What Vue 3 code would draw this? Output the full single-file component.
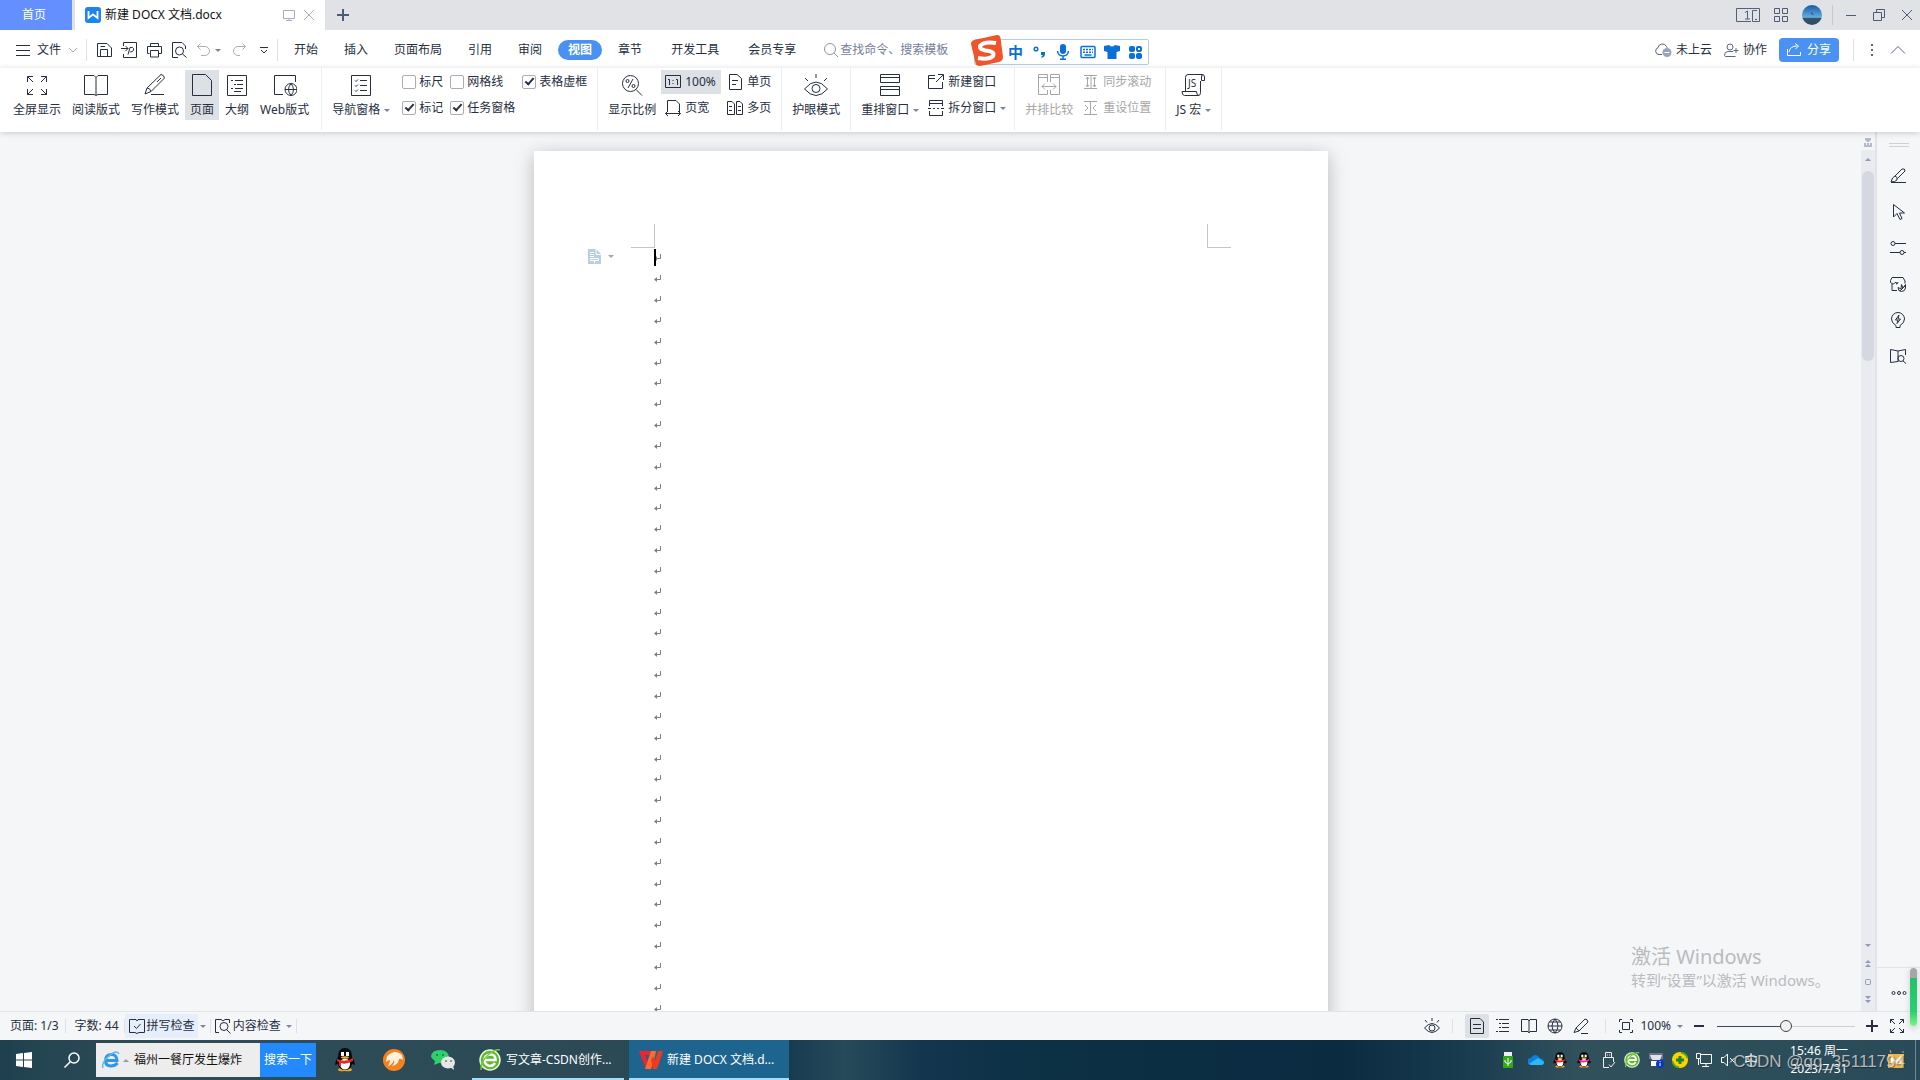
<template>
  <div class="desktop">
    <header class="title-bar">
      <button class="home-tab">首页</button>
      <div class="doc-tab">
        <svg class="logo-w" width="16" height="16" viewBox="0 0 16 16">
          <rect width="16" height="16" rx="3" fill="#1b84f5" />
          <path d="M3.500 4V11L8 7.500L12.500 11V4" fill="none" stroke="#fff" stroke-width="1.800" />
        </svg>
        <span class="doc-name">新建 DOCX 文档.docx</span>
        <button class="plain pale" aria-label="桌面"><Icon name="screen" :size="12" /></button>
        <button class="plain pale" aria-label="关闭标签"><Icon name="close" :size="12" /></button>
      </div>
      <button class="plain add-tab" aria-label="新建标签"><Icon name="plus" :size="12" /></button>
      <div class="window-tools">
        <svg width="24" height="14" viewBox="0 0 24 14" fill="none" stroke="#52607c">
          <path d="M15 13.5H.5V.5H23.5V13.5H16.5V2.5H21M9 4.5L11.500 3V11M9 11H14M19 11.500H21" />
        </svg>
        <Icon name="grid" :size="14" />
        <svg width="20" height="20" viewBox="0 0 20 20">
          <defs>
            <linearGradient id="sky" x2="0" y2="1">
              <stop offset="0" stop-color="#1c57a5" />
              <stop offset=".62" stop-color="#63aee0" />
              <stop offset=".65" stop-color="#38536a" />
              <stop offset="1" stop-color="#2c4b60" />
            </linearGradient>
          </defs>
          <circle cx="10" cy="10" r="10" fill="url(#sky)" />
          <path d="M9 7L12 10L9.500 9Z" fill="#24384f" />
        </svg>
        <i class="bar-line"></i>
        <button class="plain" aria-label="最小化"><Icon name="minimize" :size="12" /></button>
        <button class="plain" aria-label="还原"><Icon name="restore" :size="12" /></button>
        <button class="plain" aria-label="关闭"><Icon name="close" :size="12" /></button>
      </div>
    </header>

    <div class="menu-row">
      <button class="plain file-btn">
        <Icon name="lines" :size="14" />文件<Icon class="faint" name="chevron" :size="10" />
      </button>
      <i class="v-line"></i>
      <div class="quick">
        <button v-for="n in ['save', 'export', 'print', 'preview']" :key="n" class="plain" :aria-label="n">
          <Icon :name="n" :size="16" />
        </button>
        <button class="plain undo faint" aria-label="撤销"><Icon name="undo" :size="14" /><i class="caret"></i></button>
        <button class="plain faint" aria-label="恢复"><Icon name="redo" :size="14" /></button>
        <button class="plain more-quick" aria-label="更多"><Icon name="more" :size="8" /></button>
      </div>
      <i class="v-line"></i>
      <nav class="tabs">
        <button v-for="t in tabs" :key="t" class="tab" :class="{ active: t === '视图', wide: t === '开发工具' || t === '会员专享' }">{{ t }}</button>
      </nav>
      <label class="search">
        <Icon name="search" :size="16" />
        <input type="text" placeholder="查找命令、搜索模板" aria-label="查找命令" />
      </label>
      <div class="menu-right">
        <button class="plain with-icon">
          <svg width="17" height="16" viewBox="0 0 17 16" fill="none" stroke="#52607c">
            <path d="M7 12.500H4A3.500 3.500 0 0 1 3 5.700A4.500 4.500 0 0 1 11.500 4.500Q12 5 12.200 6" />
            <circle cx="12" cy="10.500" r="4.500" fill="#9aa3b8" stroke="none" />
            <path d="M9.500 10.500H14.500" stroke="#fff" />
          </svg>未上云
        </button>
        <button class="plain with-icon"><Icon class="slate" name="person" :size="15" />协作</button>
        <button class="share"><Icon name="share" :size="14" />分享</button>
        <i class="v-line"></i>
        <button class="plain slate" aria-label="更多"><Icon name="dots" :size="12" /></button>
        <button class="plain slate" aria-label="收起"><Icon name="collapse" :size="16" /></button>
      </div>
      <!-- 输入法悬浮条 -->
      <div class="ime">
        <svg class="ime-logo" width="32" height="32" viewBox="0 0 32 32">
          <path d="M3 5L26 0Q29 0 29.500 3L32 22Q32 26 28 27L9 31Q5 31 4.500 28L0 9Q0 6 3 5Z" fill="#f0542a" />
          <path d="M25 8Q13 6 9 11Q8 15 18 16Q24 17 22 21Q18 25 7 23" fill="none" stroke="#fff" stroke-width="4" />
        </svg>
        <b class="ime-zh">中</b>
        <svg width="16" height="16" viewBox="0 0 16 16" fill="#0b6fd8">
          <circle cx="4" cy="5" r="1.800" fill="none" stroke="#0b6fd8" stroke-width="1.500" />
          <path d="M9 8H13V11Q12 13.500 9.500 14V12.500L11 11H9Z" />
        </svg>
        <svg width="16" height="16" viewBox="0 0 16 16" fill="#0b6fd8">
          <rect x="4" y="0" width="6" height="10" rx="3" />
          <path d="M1.500 7Q2 12 7 12T12.500 7M7 12V16M4 15.300H10" fill="none" stroke="#0b6fd8" stroke-width="1.500" />
        </svg>
        <svg width="16" height="16" viewBox="0 0 16 16" fill="none" stroke="#0b6fd8" stroke-width="1.500">
          <rect x="1" y="2.500" width="14" height="11" rx="1" />
          <path d="M3 5.500H13M3 8.300H13" stroke-dasharray="2 1" /><path d="M4.500 11H11.500" />
        </svg>
        <svg width="16" height="16" viewBox="0 0 16 16" fill="#0b6fd8">
          <path d="M0 2L5 1Q8 4 11 1L16 2V7L12.500 8V15H3.500V8L0 7Z" />
        </svg>
        <svg width="16" height="16" viewBox="0 0 16 16" fill="#0b6fd8">
          <rect x="1" y="2" width="6" height="6" rx="2" /><rect x="1" y="9" width="6" height="6" rx="2" />
          <rect x="8" y="9" width="6" height="6" rx="2" />
          <rect x="9" y="3" width="4" height="4" rx="1" fill="none" stroke="#0b6fd8" stroke-width="2" />
        </svg>
      </div>
    </div>

    <div class="ribbon">
      <section class="group views">
        <button v-for="v in views" :key="v.text" class="big" :class="{ on: v.text === '页面' }">
          <Icon :name="v.icon" :size="24" /><span>{{ v.text }}</span>
        </button>
      </section>
      <section class="group">
        <button class="big"><Icon name="nav" :size="24" /><span>导航窗格<i class="caret"></i></span></button>
        <div class="checks">
          <label v-for="c in checks" :key="c.text"><input type="checkbox" :checked="c.on" />{{ c.text }}</label>
        </div>
      </section>
      <section class="group zooms">
        <button class="big"><Icon name="percent" :size="24" /><span>显示比例</span></button>
        <div class="pairs">
          <button class="small on"><Icon name="one" :size="16" />100%</button>
          <button class="small"><Icon name="single" :size="16" />单页</button>
          <button class="small"><Icon name="width" :size="16" />页宽</button>
          <button class="small"><Icon name="multi" :size="16" />多页</button>
        </div>
      </section>
      <section class="group">
        <button class="big"><Icon name="eye" :size="24" /><span>护眼模式</span></button>
      </section>
      <section class="group">
        <button class="big"><Icon name="arrange" :size="24" /><span>重排窗口<i class="caret"></i></span></button>
        <div class="stack">
          <button class="small"><Icon name="newwin" :size="16" />新建窗口</button>
          <button class="small"><Icon name="split" :size="16" />拆分窗口<i class="caret"></i></button>
        </div>
      </section>
      <section class="group compare">
        <button class="big" disabled><Icon name="compare" :size="24" /><span>并排比较</span></button>
        <div class="stack">
          <button class="small" disabled><Icon name="sync" :size="16" />同步滚动</button>
          <button class="small" disabled><Icon name="reset" :size="16" />重设位置</button>
        </div>
      </section>
      <section class="group last">
        <button class="big">
          <svg width="24" height="24" viewBox="0 0 24 24" fill="none" stroke="currentColor">
            <path d="M4.500 17V3.500Q4.500 .5 7 .5H21Q23.500 .5 23.500 3V6.500H20.500V3Q20.500 .5 22 .5M19.500 7V18.500Q19.500 21.500 17.500 21.500H3.500Q1 21.500 1 17.500H15.500Q15.500 21.500 18 21.500" />
            <text x="7" y="13" font-size="10" fill="currentColor" stroke="none">JS</text>
          </svg>
          <span>JS 宏<i class="caret"></i></span>
        </button>
      </section>
    </div>

    <main class="workspace">
      <div class="canvas">
        <article class="page">
          <div class="corners"><i class="corner left"></i><i class="corner right"></i></div>
          <ul class="lines">
            <li v-for="n in 37" :key="n">
              <svg width="7" height="8" viewBox="0 0 7 8" fill="none" stroke="#808080">
                <path d="M6.500 0V4.500H1" /><path d="M3 2V7L0 4.500Z" fill="#808080" stroke="none" />
              </svg>
            </li>
          </ul>
          <i class="cursor"></i>
          <button class="page-mark" aria-label="页面选项">
            <svg width="13" height="15" viewBox="0 0 13 15">
              <path d="M0 0H8L13 5V15H0Z" fill="#b8cdea" />
              <path d="M8 0V5.500H13M2 3.500H6M2 5.500H6M2 7.500H6M2.500 9.500H10.500V11.500H2.500ZM6.500 11.500V14" fill="none" stroke="#fff" />
            </svg>
            <i class="caret"></i>
          </button>
        </article>
        <p class="activate"><span>激活 Windows</span><small>转到“设置”以激活 Windows。</small></p>
      </div>
      <div class="scroll">
        <svg class="ruler" width="8" height="9" viewBox="0 0 8 9" fill="#b3bace"><path d="M1 0H7V2L4 4.500L1 2ZM0 5H2V7H3V5H5V7H6V5H8V9H0Z" /></svg>
        <div class="track">
          <i class="arrow up"></i>
          <i class="thumb"></i>
          <i class="arrow down"></i>
          <svg width="8" height="8" viewBox="0 0 8 8" fill="#8f9ab5"><path d="M4 0L7 3H1ZM4 4L7 7H1Z" /></svg>
          <svg width="8" height="8" viewBox="0 0 8 8" fill="none" stroke="#8f9ab5"><rect x="1.500" y="1.500" width="5" height="5" rx="1" /></svg>
          <svg width="8" height="8" viewBox="0 0 8 8" fill="#8f9ab5"><path d="M1 0H7L4 3ZM1 4H7L4 7Z" /></svg>
        </div>
      </div>
      <aside class="side">
        <i class="grip"></i>
        <button v-for="s in sideTools" :key="s" class="plain" :aria-label="s"><Icon :name="s" :size="16" /></button>
        <div class="side-more"><Icon name="ellipsis" :size="16" /></div>
      </aside>
    </main>

    <footer class="status">
      <span class="stat first">页面: 1/3</span>
      <span class="stat">字数: 44</span>
      <button class="stat tool"><span class="lit"><Icon name="spell" :size="16" />拼写检查</span><i class="caret"></i></button>
      <button class="stat tool"><span><Icon name="content" :size="16" />内容检查</span><i class="caret"></i></button>
      <div class="status-right">
        <button class="plain" aria-label="护眼"><Icon name="eyeSmall" :size="16" /></button>
        <i class="v-line"></i>
        <div class="modes">
          <button v-for="m in modes" :key="m" class="plain mode" :class="{ on: m === 'doc' }" :aria-label="m"><Icon :name="m" :size="16" /></button>
        </div>
        <i class="v-line"></i>
        <button class="plain zoom-value"><Icon name="fit" :size="16" />100%<i class="caret"></i></button>
        <button class="plain" aria-label="缩小"><Icon name="minusBold" :size="12" /></button>
        <input class="zoom" type="range" value="50" aria-label="缩放" />
        <button class="plain zoom-in" aria-label="放大"><Icon name="plus" :size="12" /></button>
        <button class="plain" aria-label="全屏"><Icon name="expand" :size="16" /></button>
      </div>
    </footer>

    <footer class="taskbar">
      <button class="plain start" aria-label="开始">
        <svg width="16" height="16" viewBox="0 0 16 16" fill="#fff"><path d="M0 2L7 1V7.500H0ZM8 1L16 0V7.500H8ZM0 8.500H7V15L0 14ZM8 8.500H16V16L8 15Z" /></svg>
      </button>
      <button class="plain find" aria-label="搜索">
        <svg width="16" height="16" viewBox="0 0 16 16" fill="none" stroke="#fff" stroke-width="1.500"><circle cx="10" cy="6" r="5" /><path d="M6.500 9.500L.5 15.500" /></svg>
      </button>
      <div class="hot">
        <svg width="18" height="18" viewBox="0 0 18 18" fill="none">
          <path d="M15.500 12Q13 15 9 15Q3.500 15 3.500 9.500T9 3.500T15 9.500H5" stroke="#2f95ea" stroke-width="3" />
          <path d="M1 17Q-1 12 7 5T17 3" stroke="#5bb6f7" stroke-width="1.500" />
        </svg>
        <i class="caret up-caret"></i>
        <input type="text" value="福州一餐厅发生爆炸" aria-label="热搜" />
        <button>搜索一下</button>
      </div>
      <button class="plain app" aria-label="QQ"><Penguin scarf="#e3262b" :size="24" /></button>
      <button class="plain app" aria-label="游戏">
        <svg width="24" height="24" viewBox="0 0 24 24">
          <circle cx="12" cy="12" r="11" fill="#f58220" />
          <path d="M4 14Q4 6 12 4Q17 4 20 7L21 12Q19 10 17 11Q16 17 10 18Q13 15 12 12Q10 17 6 18Q8 15 8 12Q6 12 4 14Z" fill="#fff3df" />
        </svg>
      </button>
      <button class="plain app" aria-label="微信">
        <svg width="24" height="24" viewBox="0 0 24 24">
          <path d="M3 17L4 13Q0 10 0 8Q1 2 9 2T18 9Q17 16 8 15Z" fill="#2fd06c" />
          <ellipse cx="17" cy="14.500" rx="7" ry="6" fill="#e6e6e6" /><path d="M19 19L23 22L22 17Z" fill="#e6e6e6" />
          <g fill="#1a7b42"><circle cx="6" cy="7" r="1" /><circle cx="12" cy="7" r="1" /></g>
          <g fill="#777"><circle cx="15" cy="13" r="1" /><circle cx="20" cy="13" r="1" /></g>
        </svg>
      </button>
      <button class="task">
        <BrowserE :size="22" />写文章-CSDN创作...
      </button>
      <button class="task current">
        <svg width="24" height="20" viewBox="0 0 24 20">
          <path d="M0 1H12L11 5H6L9 13L7 19Z" fill="#f5222a" />
          <path d="M6 19L12 1H17L15 11L12 19Z" fill="#ff6a30" />
          <path d="M24 1H19L16 11L14 6L12 10L14 19H18Z" fill="#f0391f" />
        </svg>新建 DOCX 文档.d...
      </button>
      <div class="tray">
        <svg class="usb" width="16" height="16" viewBox="0 0 16 16"><path d="M4 0H12V4H4Z" fill="#eee" /><rect x="3" y="4" width="10" height="12" rx="1" fill="#35a818" /><path d="M8 14V6M5 8V10L8 12L11 10V8" fill="none" stroke="#fff" /></svg>
        <svg width="16" height="16" viewBox="0 0 16 16"><path d="M3 13A3.500 3.500 0 0 1 3 6Q6 1 10 4L12 6Q16 7 16 10T13 13Z" fill="#0a7fe0" /><path d="M1 12L10 6L16 10Q16 13 13 13H3Z" fill="#2fb8f5" /></svg>
        <Penguin scarf="#e3262b" :size="16" />
        <Penguin scarf="#f0219d" :size="16" />
        <svg width="16" height="16" viewBox="0 0 16 16" fill="none" stroke="#eee"><path d="M5.500 5V.5H11.500V5M9 15.500H3.500V5.500H13.500V10M7 3H8M9 3H10M9 12.500L11 15L15 10" /></svg>
        <BrowserE :size="16" />
        <svg width="16" height="16" viewBox="0 0 16 16"><path d="M1 1H15V7H1Z" fill="#6d7490" /><path d="M2 3H14L12 8H4Z" fill="#dfe3f0" /><path d="M3 9H10V14H3Z" fill="#fff" /><circle cx="12" cy="12" r="4" fill="#0b35c4" /><path d="M12 9V10M12 11V14" stroke="#fff" /></svg>
        <svg width="16" height="16" viewBox="0 0 16 16"><circle cx="8" cy="8" r="8" fill="#fbd400" /><path d="M0 9Q2 15 7 15.500M9 .5Q14 1 15.500 6" stroke="#47a420" stroke-width="2" fill="none" /><path d="M8 4V12M4 8H12" stroke="#218220" stroke-width="3" /></svg>
        <svg width="16" height="16" viewBox="0 0 16 16" fill="none" stroke="#fff"><path d="M4 2.500H15.500V11.500H4.500V7M10 11.500V14.500M6 14.500H13M.5 1.500H4.500V6.500H.5ZM2.500 6.500V13" /></svg>
        <svg width="16" height="16" viewBox="0 0 16 16" fill="none" stroke="#fff"><path d="M1.500 5.500H4L7.500 2V14L4 10.500H1.500ZM10 6L14.500 10.500M14.500 6L10 10.500" /></svg>
        <span class="tray-zh">中</span>
      </div>
      <time class="clock"><span>15:46 周一</span><span>2023/7/31</span></time>
      <svg class="note" width="16" height="18" viewBox="0 0 16 18"><path d="M0 4H16V18H0Z" fill="#efb640" /><path d="M2 0L3 3M15 1V3" stroke="#d9aa48" /><path d="M4 14V8L8 12L12 8V14" stroke="#fff" stroke-width="2" fill="none" /></svg>
      <i class="peek"></i>
    </footer>

    <div class="battery"></div>
    <p class="mark">CSDN @qq_35111794</p>
  </div>
</template>

<script setup>
import { h } from 'vue'

const tabs = ['开始', '插入', '页面布局', '引用', '审阅', '视图', '章节', '开发工具', '会员专享']
const views = [
  { text: '全屏显示', icon: 'full' },
  { text: '阅读版式', icon: 'read' },
  { text: '写作模式', icon: 'write' },
  { text: '页面', icon: 'page' },
  { text: '大纲', icon: 'outline' },
  { text: 'Web版式', icon: 'web' },
]
const checks = [
  { text: '标尺', on: false },
  { text: '网格线', on: false },
  { text: '表格虚框', on: true },
  { text: '标记', on: true },
  { text: '任务窗格', on: true },
]
const sideTools = ['brush', 'pointer', 'sliders', 'shop', 'bulb', 'lookup']
const modes = ['doc', 'list', 'book', 'globe', 'pen']

// 线条图标, 坐标与显示尺寸一致
const paths = {
  screen: 'M.5 1.5H11.5V9.5H.5ZM6 9.5V11.5M3 11.5H9',
  close: 'M1 1L11 11M11 1L1 11',
  plus: 'M6 0V12M0 6H12',
  minusBold: 'M1 6H11',
  grid: 'M.5 .5H5.5V5.5H.5ZM8.5 .5H13.5V5.5H8.5ZM.5 8.5H5.5V13.5H.5ZM8.5 8.5H13.5V13.5H8.5Z',
  minimize: 'M1 6.5H11',
  restore: 'M.5 3.5H8.5V11.5H.5ZM3.5 3.5V.5H11.5V8.5H8.5',
  lines: 'M0 2.5H14M0 7.5H14M0 12.5H14',
  chevron: 'M1 3L5 7L9 3',
  save: 'M1.5 1.5H11L15.5 6V14.5H1.5ZM4.5 14V7.5H11.5V14M4.5 4.500H9',
  export: 'M2.5 4V.5H15.5V15.5H2.5V12M0 6.500H7M4.500 4L7 6.500L4.500 9M7 12.500Q8 9 9 5.500H11.500Q13 6 12.500 8T9 10',
  print: 'M4.5 4V1.5H12.5V4M3.5 11.5H1.5V4.5H15.5V11.500H13M4.500 8.500H12.500V15H4.500Z',
  preview: 'M7 15.5H1.5V.5H11L14.500 4V7M12.500 9A4 4 0 1 1 4.500 9A4 4 0 1 1 12.500 9M11.500 12L15.500 15.500',
  undo: 'M4.500 .5L1.500 3.500L4.500 6.500M1.500 3.500H9A4 4 0 0 1 9 12.500H5',
  redo: 'M9.500 .5L12.500 3.500L9.500 6.500M12.500 3.500H5A4 4 0 0 0 5 12.500H7',
  more: 'M0 1.500H8M1 4L4 7L7 4',
  search: 'M12.500 7A5.500 5.500 0 1 1 1.500 7A5.500 5.500 0 1 1 12.500 7M11 11L15 15',
  person: 'M9 4A3 3 0 1 1 3 4A3 3 0 1 1 9 4M9 8.500H4Q.5 8.500 .5 12.500Q1 13.500 2 13.500H11.500M12 5V10M9.500 7.500H14.500',
  share: 'M.5 6V12.500H13.500V9M2 9Q3 3 10 3M8 .5L11.500 3L8.500 6',
  dots: 'M6 0V2M6 5V7M6 10V12',
  collapse: 'M1 11.500L8 4.500L15 11.500',
  full: 'M2.5 8V2.5H8M2.5 2.5L8 8M16 2.5H21.5V8M21.500 2.500L16 8M2.500 15V20.500H8M2.500 20.500L8 15M16 20.500H21.500V15M21.500 20.500L16 15',
  read: 'M.5 1.5H10L12 3.500L14 1.500H23.500V20.500H14L12 21.500L10 20.500H.5ZM12 3.500V21',
  write: 'M2 20L4 14L18 .5Q21 1 21.500 4L8 17.500ZM4 14Q7 14 8 17.500M14 8L18 4M8 20.500H21',
  page: 'M2.5 .5H15.500L21.500 6.500V21.500H2.500Z',
  outline: 'M2.5 1.5H21.500V21.500H2.500ZM6 6.500H8M10 6.500H18M9 10.500H11M12 10.500H18M6 14.500H8M10 14.500H18M9 17.500H16',
  web: 'M10 20.500H1.500V1.500H22.500V8M24 15.500A6 6 0 1 1 12 15.500A6 6 0 1 1 24 15.500M12 15.500H24M18 9.500Q13 15.500 18 21.500Q23 15.500 18 9.500',
  nav: 'M2.500 1.500H21.500V21.500H2.500ZM6 6.500L7 7.500L9 5.500M11 6.500H18M6 11.500L7 12.500L9 10.500M11 11.500H18M6 16.500L7 17.500L9 15.500M11 16.500H18',
  percent: 'M18.500 9.500A8 8 0 1 1 2.500 9.500A8 8 0 1 1 18.500 9.500M16 15.500L22 21.500M13 5L8 14M9 7A1.500 1.500 0 1 1 6 7A1.500 1.500 0 1 1 9 7M15 12A1.500 1.500 0 1 1 12 12A1.500 1.500 0 1 1 15 12',
  one: 'M.5 1.500H15.500V13.500H.5ZM3 5.500H4.500V11M11 5.500H12.500V11M8 6V7M8 9V10',
  single: 'M2.500 .5H10L14.500 4.500V15.500H2.500ZM5 6.500H11M5 10.500H9',
  width: 'M2.500 12V.5H11L14.500 4V12M.5 13.500H15.500M3 11L.5 13.500L3 16M13 11L15.500 13.500L13 16',
  multi: 'M.5 1.500H5L7.500 4V14.500H.5ZM9.500 1.500H13L15.500 4V14.500H9.500ZM2 6.500H5M2 10.500H5M11 6.500H14M11 10.500H14',
  eye: 'M.5 15Q12 1 23.500 15Q12 28 .5 15M16 14.500A4 4 0 1 1 8 14.500A4 4 0 1 1 16 14.500M12 0V4M1 4L4 7M23 4L20 7',
  arrange: 'M2.500 .5H21.500V8.500H2.500ZM2.500 3.500H21.500M2.500 12.500H21.500V21.500H2.500ZM2.500 15.500H21.500',
  newwin: 'M7 1.500H.5V14.500H14.500V8M.5 4.500H7M8 8L15 1M10 .5H15.500V6',
  split: 'M1.500 6V.5H14.500V6M1.500 3.500H14.500M0 8.500H3M5 8.500H7M9 8.500H11M13 8.500H16M1.500 11V15.500H14.500V11',
  compare: 'M6 20.500H1.500V.5H10.500V8M1.500 3.500H10.500M18 20.500H22.500V.5H13.500V8M13.500 3.500H22.500M10.500 16V20.500H6M13.500 16V20.500H18M5 12.500H19M8 9.500L5 12.500L8 15.500M16 9.500L19 12.500L16 15.500',
  sync: 'M1 1.500H14M1 14.500H14M4.500 3V13M11.500 3V13M8 1V14M3 5L4.500 3L6 5M3 11L4.500 13L6 11M10 5L11.500 3L13 5M10 11L11.500 13L13 11',
  reset: 'M1 1.500H14M1 14.500H14M7.500 2V14M2 5L5 8L2 11M13 5L10 8L13 11',
  brush: 'M1 14.500H16M1 14Q2 9 5 8Q8 9 7 12Q5 14 1 14M5 8L12 1Q15 0 15 3L7.500 10.500',
  pointer: 'M3.500 0.500V13L7 9.500L10 15.500L12 14.500L9.500 9H14.500Z',
  sliders: 'M5 3.500H16M5 3.500A2 2 0 1 1 1 3.500A2 2 0 1 1 5 3.500M0 12.500H10M14 12.500H16M14 12.500A2 2 0 1 1 10 12.500A2 2 0 1 1 14 12.500',
  shop: 'M2 8V14.500H7M7 8Q7 6 5 6.500Q4 9 1.500 7.500Q0 6 .5 4.500L2 1.500H13L15 5V7.500M8 6Q8 8 6 8M15.500 8.500V12Q15 15.500 11.500 15.500T8 11.500L11 13L11.500 8.500L13 12ZM10 15L15 10',
  bulb: 'M6 15.500V13.500Q1.500 11 1.500 7A6.500 6.500 0 0 1 14.500 7Q14.500 11 10 13.500V15.500ZM9 3L5.500 8H8L7 11.500L10.500 7H8Z',
  lookup: 'M8 13.500L.5 14.500V1.500L8 3L15.500 1.500V7M8 3V14M14 10.500A3 3 0 1 1 8 10.500A3 3 0 1 1 14 10.500M13 13L16 15.500',
  ellipsis: 'M4 8A1.500 1.500 0 1 1 1 8A1.500 1.500 0 1 1 4 8M9.500 8A1.500 1.500 0 1 1 6.500 8A1.500 1.500 0 1 1 9.500 8M15 8A1.500 1.500 0 1 1 12 8A1.500 1.500 0 1 1 15 8',
  spell: 'M7 1.500H.5V14.500H6L8 15.500L10 14.500H15.500V1.500H9L8 3L7 1.500M5 8L7.500 10.500L11.500 6',
  content: 'M4 14.500H.5V1.500H6L8 3L10 1.500H14.500V5M13 8.500A4 4 0 1 1 5 8.500A4 4 0 1 1 13 8.500M12 12L15.500 15.500',
  eyeSmall: 'M.5 10Q8 1 15.500 10Q8 19 .5 10M11 10A3 3 0 1 1 5 10A3 3 0 1 1 11 10M8 0V3M1 2L3 4.500M15 2L13 4.500',
  doc: 'M1.500 .5H11L14.500 4V15.500H1.500ZM4 6.500H12M4 10.500H12',
  list: 'M1 1.500H3M4 1.500H14M4 5.500H6M7 5.500H14M4 9.500H6M7 9.500H14M1 13.500H3M4 13.500H14',
  book: 'M.5 1.500H7L8 3L9 1.500H15.500V13.500H9L8 15L7 13.500H.5ZM8 3V14',
  globe: 'M15 8A7 7 0 1 1 1 8A7 7 0 1 1 15 8M1 8H15M8 1Q2 8 8 15Q14 8 8 1M2.500 4H13.500M2.500 12H13.500',
  pen: 'M1 14.500L3 10L12 1Q14.500 1 15 4L6 13ZM3 10L6 13M8 15.500H15',
  fit: 'M1.500 4V1.500H4M12 1.500H14.500V4M14.500 12V14.500H12M4 14.500H1.500V12M4.500 4.500H11.500V11.500H4.500Z',
  expand: 'M1.500 5V1.500H5M1.500 1.500L6 6M11 1.500H14.500V5M14.500 1.500L10 6M1.500 11V14.500H5M1.500 14.500L6 10M11 14.500H14.500V11M14.500 14.500L10 10',
}

function Icon(props) {
  const s = props.size
  return h('svg', { width: s, height: s, viewBox: `0 0 ${s} ${s}`, fill: 'none', stroke: 'currentColor' }, [
    h('path', { d: paths[props.name], 'stroke-width': ['plus', 'minusBold', 'dots'].includes(props.name) ? 2 : 1 }),
  ])
}
Icon.props = ['name', 'size']

function Penguin(props) {
  return h('svg', { width: props.size, height: props.size, viewBox: '0 0 24 24' }, [
    h('path', { d: 'M5 22Q5 20 9 20H15Q19 20 19 22Q18 24 12 23Q6 24 5 22', fill: '#f5a81c' }),
    h('path', { d: 'M12 0Q19 0 19 9Q22 13 22 17L19 16Q18 22 12 22T5 16L2 17Q2 13 5 9Q5 0 12 0', fill: '#0a0a0a' }),
    h('ellipse', { cx: 12, cy: 16, rx: 5, ry: 5.5, fill: '#fff' }),
    h('path', { d: 'M4 11Q12 15 20 10V13Q12 17 8 15V18H6V14L4 13Z', fill: props.scarf }),
    h('path', { d: 'M8 4H11V8H8ZM13 4H16V8H13Z', fill: '#fff' }),
    h('ellipse', { cx: 12, cy: 9.5, rx: 4, ry: 1.2, fill: '#f5a81c' }),
  ])
}
Penguin.props = ['scarf', 'size']

function BrowserE(props) {
  return h('svg', { width: props.size, height: props.size, viewBox: '0 0 22 22' }, [
    h('circle', { cx: 11, cy: 11, r: 10, fill: '#5cb82c', stroke: '#e9f6df', 'stroke-width': 1.5 }),
    h('path', { d: 'M16 14Q14 17 11 17Q5.500 16 5.500 11T11 5.500T16.500 11H6', fill: 'none', stroke: '#fff', 'stroke-width': 2.5 }),
    h('path', { d: 'M2 21Q2 12 9 6T21 1', fill: 'none', stroke: '#77c83c', 'stroke-width': 1.5 }),
  ])
}
BrowserE.props = ['size']
</script>

<style>
body {
  margin: 0;
  overflow: hidden;
}
</style>

<style scoped>
.desktop {
  position: relative;
  display: flex;
  flex-direction: column;
  height: 100vh;
  background: #f5f6f8;
  color: #262e40;
  font-family: 'Noto Sans', 'Noto Sans CJK SC', sans-serif;
  font-size: 12px;
  line-height: 16px;
  white-space: nowrap;
}
button,
input {
  margin: 0;
  padding: 0;
  border: 0;
  background: none;
  color: inherit;
  font: inherit;
}
svg {
  display: block;
  flex: none;
}
p {
  margin: 0;
}
.plain {
  display: flex;
  align-items: center;
}
.faint {
  color: #a9adb8;
}
.slate {
  color: #5b667f;
}
.caret {
  display: inline-block;
  flex: none;
  border: 3px solid transparent;
  border-top-color: #7b849b;
  border-bottom: 0;
}
.v-line {
  flex: none;
  width: 1px;
  height: 22px;
  background: #dfe1e7;
}

/* 标题栏 */
.title-bar {
  display: flex;
  flex: none;
  height: 30px;
  background: #e1e2e6;
}
.home-tab {
  width: 72px;
  margin-right: 3px;
  padding-right: 4px;
  background: #638fff;
  color: #fff;
}
.doc-tab {
  display: flex;
  align-items: center;
  gap: 8px;
  width: 230px;
  padding: 0 10px;
  background: #fff;
  color: #111;
}
.logo-w {
  margin-right: -4px;
}
.doc-name {
  flex: 1;
}
.pale {
  color: #a5aec3;
}
.add-tab {
  margin-left: 12px;
  color: #4d5a78;
}
.window-tools {
  display: flex;
  align-items: center;
  gap: 14px;
  margin-left: auto;
  padding-right: 7px;
  color: #4d5a78;
}
.window-tools .plain {
  margin-left: 2px;
}
.bar-line {
  width: 1px;
  height: 20px;
  margin: 0 -4px;
  background: #c6c8cf;
}

/* 菜单行 */
.menu-row {
  position: relative;
  display: flex;
  flex: none;
  align-items: center;
  box-sizing: border-box;
  height: 38px;
  padding: 2px 0 0 16px;
  background: #fff;
}
.file-btn {
  gap: 7px;
  margin-right: 8px;
}
.quick {
  display: flex;
  align-items: center;
  gap: 9px;
  padding: 0 9px;
}
.undo {
  gap: 5px;
  margin-right: 3px;
}
.more-quick {
  margin-left: 4px;
}
.tabs {
  display: flex;
  gap: 6px;
  margin-left: 6px;
}
.tab {
  height: 20px;
  padding: 0 10px;
  border-radius: 10px;
}
.tab.active {
  background: #4991f2;
  color: #fff;
  font-weight: bold;
}
.tab.wide {
  margin-left: 3px;
}
.search {
  display: flex;
  align-items: center;
  gap: 1px;
  margin-left: 17px;
  color: #8d95ab;
}
.search input {
  width: 120px;
}
.search input::placeholder {
  color: #747d98;
  opacity: 1;
}
.menu-right {
  display: flex;
  align-items: center;
  gap: 12px;
  margin-left: auto;
  padding-right: 14px;
}
.with-icon {
  gap: 4px;
}
.share {
  display: flex;
  align-items: center;
  gap: 6px;
  height: 24px;
  padding: 0 8px;
  border-radius: 4px;
  background: #4991f2;
  color: #fff;
}
.menu-right .v-line {
  margin-left: 2px;
}
.ime {
  position: absolute;
  top: 9px;
  left: 974px;
  display: flex;
  align-items: center;
  gap: 8px;
  box-sizing: border-box;
  width: 175px;
  height: 26px;
  padding-left: 33px;
  border: 1px solid #b5cbe6;
  border-radius: 2px;
  background: #fff;
}
.ime-logo {
  position: absolute;
  top: -5px;
  left: -4px;
}
.ime-zh {
  width: 16px;
  color: #0b6fd8;
  font-size: 15px;
}

/* 功能区 */
.ribbon {
  position: relative;
  z-index: 1;
  display: flex;
  flex: none;
  height: 64px;
  background: #fff;
  box-shadow: 0 1px 6px rgba(0, 0, 0, 0.18);
}
.group {
  display: flex;
  align-items: flex-start;
  padding: 2px 5px 0;
  border-right: 1px solid #eceef1;
  height: 60px;
}
.views {
  gap: 1px;
  padding-left: 8px;
  padding-right: 7px;
}
.big {
  display: flex;
  flex-direction: column;
  align-items: center;
  gap: 4px;
  height: 50px;
  padding: 4px 5px 0;
}
.big span,
.small {
  display: flex;
  align-items: center;
  gap: 4px;
}
.big .caret,
.small .caret {
  margin-right: -1px;
}
.on {
  background: #dde1e6;
}
.big:disabled,
.small:disabled {
  color: #a6a6a6;
}
.checks {
  display: grid;
  grid-template-columns: auto auto auto;
  gap: 10px 7px;
  padding: 4px 5px 0 8px;
}
.checks label {
  display: flex;
  align-items: center;
  gap: 3px;
}
.checks input {
  appearance: none;
  display: grid;
  place-items: center;
  width: 14px;
  height: 14px;
  border: 1px solid #a9adb8;
  border-radius: 2px;
}
.checks input:checked::before {
  content: '';
  width: 7px;
  height: 3px;
  margin-bottom: 3px;
  border: solid #262e40;
  border-width: 0 0 2px 2px;
  rotate: -48deg;
}
.zooms {
  padding-right: 4px;
}
.pairs {
  display: grid;
  grid-template-columns: 60px 54px;
  gap: 2px;
}
.small {
  height: 24px;
  padding: 0 4px;
}
.stack {
  display: flex;
  flex-direction: column;
  gap: 2px;
  padding-left: 1px;
}
.compare {
  padding-right: 10px;
}
.last {
  padding-right: 6px;
}

/* 文档区 */
.workspace {
  display: flex;
  flex: 1;
  min-height: 0;
  overflow: hidden;
}
.canvas {
  position: relative;
  flex: 1;
  overflow: hidden;
}
.page {
  position: relative;
  box-sizing: border-box;
  width: 794px;
  height: 1123px;
  margin: 19px auto 0;
  padding: 73px 97px 0;
  background: #fff;
  box-shadow: 0 4px 18px rgba(0, 0, 0, 0.25);
}
.corners {
  display: flex;
  justify-content: space-between;
}
.corner {
  width: 23px;
  height: 23px;
  border-bottom: 1px solid #c4c4c4;
}
.corner.left {
  border-right: 1px solid #c4c4c4;
}
.corner.right {
  border-left: 1px solid #c4c4c4;
}
.lines {
  display: grid;
  grid-auto-rows: 1fr;
  height: 771px;
  margin: 0;
  padding: 0 0 0 23px;
  list-style: none;
}
.lines li {
  display: flex;
  align-items: center;
}
.cursor {
  position: absolute;
  top: 98px;
  left: 120px;
  width: 2px;
  height: 17px;
  background: #000;
}
.page-mark {
  position: absolute;
  top: 98px;
  left: 54px;
  display: flex;
  align-items: center;
  gap: 7px;
}
.page-mark .caret {
  border-top-color: #a6a6a6;
}
.activate {
  position: absolute;
  right: 30px;
  bottom: 21px;
  display: flex;
  flex-direction: column;
  width: 200px;
  color: #b9bbbe;
  font-size: 20px;
  line-height: 26px;
}
.activate small {
  font-size: 15px;
  line-height: 20px;
}
.scroll {
  display: flex;
  flex-direction: column;
  flex: none;
  width: 14px;
  border-right: 2px solid #e1e3ea;
}
.ruler {
  margin: 6px 3px 3px;
}
.track {
  display: flex;
  flex: 1;
  flex-direction: column;
  align-items: center;
  gap: 10px;
  padding: 8px 0 7px;
  background: #e9ebf1;
}
.arrow {
  border: 3px solid transparent;
}
.arrow.up {
  border-top: 0;
  border-bottom-color: #8f9ab5;
}
.arrow.down {
  margin-top: auto;
  margin-bottom: 3px;
  border-bottom: 0;
  border-top-color: #8f9ab5;
}
.thumb {
  width: 12px;
  height: 190px;
  border-radius: 6px;
  background: #d5d8e1;
}
.side {
  display: flex;
  flex: none;
  flex-direction: column;
  align-items: center;
  gap: 20px;
  width: 43px;
}
.grip {
  width: 20px;
  height: 2px;
  margin-top: 11px;
  margin-bottom: 1px;
  border: solid #cfd1d6;
  border-width: 1px 0;
}
.side .plain {
  margin-right: 1px;
}
.side-more {
  display: flex;
  justify-content: center;
  width: 100%;
  height: 26px;
  margin-top: auto;
  padding-top: 17px;
  border-top: 1px solid #e1e3ea;
}

/* 状态栏 */
.status {
  display: flex;
  flex: none;
  align-items: center;
  height: 28px;
  border-top: 1px solid #e1e3e7;
}
.stat {
  padding: 0 5px 0 9px;
  border-right: 1px solid #dfe1e7;
  line-height: 14px;
}
.stat.first {
  padding: 0 6px 0 10px;
}
.tool {
  display: flex;
  align-items: center;
  height: 14px;
  gap: 2px;
  padding: 0 4px 0 0;
}
.tool span {
  display: flex;
  align-items: center;
  gap: 2px;
  height: 24px;
  padding: 0 3px 0 4px;
}
.lit {
  background: #e6eefb;
}
.status-right {
  display: flex;
  align-items: center;
  margin-left: auto;
  padding-right: 15px;
}
.status-right .v-line {
  height: 14px;
  margin: 0 12px;
}
.modes {
  display: flex;
  gap: 2px;
}
.mode {
  justify-content: center;
  width: 24px;
  height: 24px;
  border-radius: 2px;
}
.zoom-value {
  gap: 6px;
  margin-right: 10px;
}
.zoom {
  appearance: none;
  width: 138px;
  height: 1px;
  margin: 0 11px 0 12px;
  background: linear-gradient(to right, #3c4660 50%, #c9cdd6 50%);
}
.zoom::-webkit-slider-thumb {
  appearance: none;
  box-sizing: border-box;
  width: 12px;
  height: 12px;
  border: 1px solid #444;
  border-radius: 50%;
  background: #f1f1f1;
}
.zoom-in {
  margin-right: 11px;
}

/* 任务栏 */
.taskbar {
  display: flex;
  flex: none;
  align-items: center;
  height: 40px;
  background: linear-gradient(to right, #1f414f, #2e4d58 8%, #2c4a55 32%, #173a50 41%, #274a5a 44%, #13364e 48%, #0c3044 54%, #0b2b41 70%, #1b3e50 77%, #30505c 82%, #294b59);
  color: #fff;
}
.start {
  margin: 0 32px 0 16px;
}
.find {
  margin-right: 16px;
}
.hot {
  display: flex;
  align-items: center;
  width: 220px;
  height: 34px;
  margin-right: 17px;
  background: #ededed;
  color: #111;
}
.hot svg {
  margin: 0 3px 0 6px;
}
.up-caret {
  border: 3px solid transparent;
  border-top: 0;
  border-bottom-color: #999;
}
.hot input {
  flex: 1;
  min-width: 0;
  margin-left: 5px;
}
.hot button {
  align-self: stretch;
  width: 56px;
  background: #2389ff;
  color: #fff;
}
.app {
  justify-content: center;
  width: 24px;
  margin-right: 25px;
}
.task {
  display: flex;
  align-items: center;
  box-sizing: border-box;
  gap: 5px;
  width: 152px;
  height: 40px;
  margin: 0 5px 0 -8px;
  padding: 2px 7px 0;
  border-bottom: 2px solid #a5dcf8;
}
.task.current {
  gap: 4px;
  width: 160px;
  margin-left: 0;
  padding-left: 10px;
  background: #1d658f;
}
.tray {
  display: flex;
  align-items: center;
  gap: 8px;
  margin-left: auto;
}
.usb {
  margin-right: 4px;
}
.tray-zh {
  width: 16px;
  font-size: 14px;
}
.clock {
  display: flex;
  flex-direction: column;
  align-items: center;
  width: 60px;
  margin: 0 39px 0 29px;
  line-height: 18px;
}
.note {
  margin-bottom: 3px;
}
.peek {
  width: 1px;
  height: 40px;
  margin: 0 4px 0 11px;
  background: #71868f;
}

/* 悬浮在窗口之上 */
.battery {
  position: absolute;
  z-index: 2;
  right: 3px;
  bottom: 54px;
  width: 7px;
  height: 58px;
  border-radius: 4px;
  background: linear-gradient(#a6a6a6 10px, #25c168 10px, #28d070 75%, #7df584);
  box-shadow: 0 2px 4px 2px rgba(200, 205, 210, 0.5);
}
.mark {
  position: absolute;
  right: 15px;
  bottom: 8px;
  color: rgba(225, 225, 225, 0.75);
  font-family: 'Liberation Sans', sans-serif;
  font-size: 17px;
  line-height: 20px;
  text-shadow: 1px 1px 1px rgba(0, 0, 0, 0.4);
}
</style>
